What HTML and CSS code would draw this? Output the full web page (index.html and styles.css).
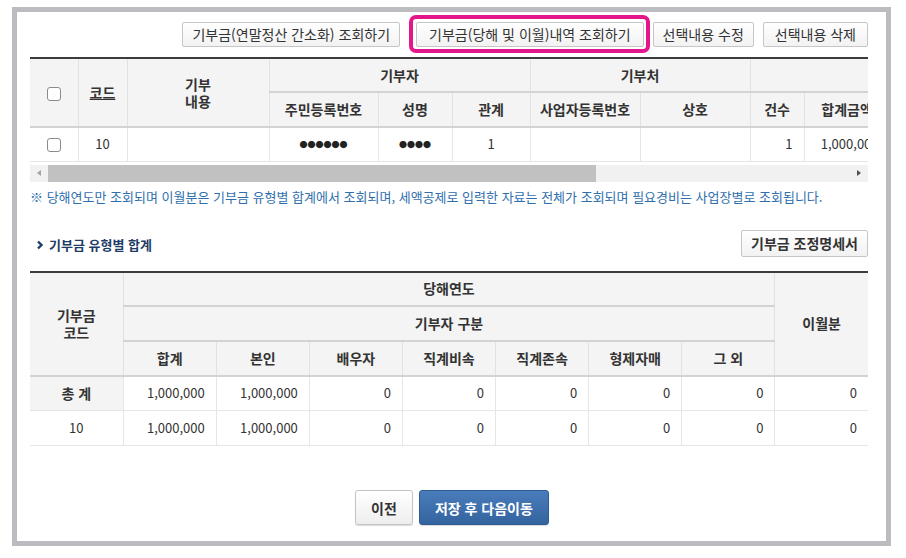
FILE: index.html
```html
<!doctype html>
<html lang="ko">
<head>
    <meta charset="UTF-8">
    <meta name="viewport" content="width=device-width, initial-scale=1.0">
    <title>기부금 명세</title>
    <link rel="stylesheet" href="styles.css">
</head>
<body>
    <div class="frame">
        <div class="top-actions">
            <button class="btn">기부금(연말정산 간소화) 조회하기</button>
            <span class="highlight"><button class="btn">기부금(당해 및 이월)내역 조회하기</button></span>
            <button class="btn">선택내용 수정</button>
            <button class="btn btn-last">선택내용 삭제</button>
        </div>

        <div class="scroll-view">
            <table class="grid list">
                <colgroup>
                    <col style="width:48px"><col style="width:49px"><col style="width:142px">
                    <col style="width:109px"><col style="width:74px"><col style="width:78px">
                    <col style="width:110px"><col style="width:110px"><col style="width:54px">
                    <col style="width:86px"><col style="width:110px"><col style="width:130px">
                    <col style="width:80px">
                </colgroup>
                <thead>
                    <tr>
                        <th rowspan="2"><span class="check"></span></th>
                        <th rowspan="2"><u>코드</u></th>
                        <th rowspan="2">기부<br>내용</th>
                        <th colspan="3" class="group">기부자</th>
                        <th colspan="2" class="group">기부처</th>
                        <th colspan="5" class="group last">기부명세</th>
                    </tr>
                    <tr>
                        <th>주민등록번호</th>
                        <th>성명</th>
                        <th>관계</th>
                        <th>사업자등록번호</th>
                        <th>상호</th>
                        <th>건수</th>
                        <th>합계금액</th>
                        <th>공제대상금액</th>
                        <th>장려금신청</th>
                        <th class="last">기타</th>
                    </tr>
                </thead>
                <tbody>
                    <tr>
                        <td class="center"><span class="check"></span></td>
                        <td class="center">10</td>
                        <td></td>
                        <td class="center"><span class="dots">●●●●●●</span></td>
                        <td class="center"><span class="dots">●●●●</span></td>
                        <td class="center">1</td>
                        <td></td>
                        <td></td>
                        <td class="num">1</td>
                        <td class="num">1,000,000</td>
                        <td class="num">1,000,000</td>
                        <td class="num">0</td>
                        <td class="last"></td>
                    </tr>
                </tbody>
            </table>
        </div>
        <div class="hscroll">
            <span class="arrow arrow-left"></span>
            <span class="thumb"></span>
            <span class="arrow arrow-right"></span>
        </div>

        <p class="notice">※ 당해연도만 조회되며 이월분은 기부금 유형별 합계에서 조회되며, 세액공제로 입력한 자료는 전체가 조회되며 필요경비는 사업장별로 조회됩니다.</p>

        <div class="section-head">
            <h4 class="section-title">
                <svg width="8" height="10" viewBox="0 0 8 10"><polyline points="2,1.5 5.5,5 2,8.5" fill="none" stroke="#1d3c66" stroke-width="2.4"/></svg>
                기부금 유형별 합계
            </h4>
            <button class="btn btn-strong">기부금 조정명세서</button>
        </div>

        <table class="grid summary">
            <thead>
                <tr>
                    <th rowspan="3">기부금<br>코드</th>
                    <th colspan="7" class="group">당해연도</th>
                    <th rowspan="3" class="last">이월분</th>
                </tr>
                <tr>
                    <th colspan="7" class="group">기부자 구분</th>
                </tr>
                <tr>
                    <th>합계</th>
                    <th>본인</th>
                    <th>배우자</th>
                    <th>직계비속</th>
                    <th>직계존속</th>
                    <th>형제자매</th>
                    <th>그 외</th>
                </tr>
            </thead>
            <tbody>
                <tr>
                    <td class="center total">총 계</td>
                    <td class="num">1,000,000</td>
                    <td class="num">1,000,000</td>
                    <td class="num">0</td>
                    <td class="num">0</td>
                    <td class="num">0</td>
                    <td class="num">0</td>
                    <td class="num">0</td>
                    <td class="num last">0</td>
                </tr>
                <tr>
                    <td class="center">10</td>
                    <td class="num">1,000,000</td>
                    <td class="num">1,000,000</td>
                    <td class="num">0</td>
                    <td class="num">0</td>
                    <td class="num">0</td>
                    <td class="num">0</td>
                    <td class="num">0</td>
                    <td class="num last">0</td>
                </tr>
            </tbody>
        </table>

        <div class="bottom-actions">
            <button class="btn-big">이전</button>
            <button class="btn-big btn-primary">저장 후 다음이동</button>
        </div>
    </div>
</body>
</html>
```

FILE: styles.css
```css
body {
    margin: 0;
    font-family: "Noto Sans CJK KR", "Liberation Sans", sans-serif;
    font-size: 13px;
    color: #333333;
    background-color: #ffffff;
}

.frame {
    box-sizing: border-box;
    width: 879px;
    height: 539px;
    margin: 7px 0 0 12px;
    padding: 0 18px 0 13px;
    border: 5px solid #bcbcc0;
}

/* top buttons */
.top-actions {
    display: flex;
    justify-content: flex-end;
    padding-top: 10px;
    margin-bottom: 10px;
}

.btn {
    height: 25px;
    padding: 0 9px;
    border: 1px solid #c6c6c6;
    border-radius: 2px;
    background: linear-gradient(#ffffff, #f2f2f2);
    font-family: inherit;
    font-size: 14px;
    line-height: 23px;
    color: #333333;
    cursor: pointer;
}

.highlight {
    position: relative;
    display: flex;
    margin: 0 9px 0 16px;
}

.highlight .btn {
    padding: 0 12px;
}

.highlight::after {
    content: "";
    position: absolute;
    top: -7px;
    left: -7px;
    right: -6px;
    bottom: -6px;
    border: 4px solid #e3168b;
    border-radius: 7px;
}

.btn-last {
    margin-left: 9px;
    padding: 0 11px;
}

/* tables */
.scroll-view {
    width: 838px;
    overflow: hidden;
}

.grid {
    border-collapse: collapse;
    table-layout: fixed;
    border-top: 2px solid #3c3c3c;
}

.grid th {
    background-color: #f4f4f4;
    font-size: 14px;
    font-weight: bold;
    color: #333333;
    text-align: center;
    line-height: 17px;
    padding: 0;
    border-right: 1px solid #e2e2e2;
    border-bottom: 2px solid #d3d3d3;
    white-space: nowrap;
}

.grid td {
    padding: 0;
    border-right: 1px solid #e6e6e6;
    border-bottom: 1px solid #e6e6e6;
    line-height: 16px;
}

.grid .last {
    border-right: none;
}

.grid .center {
    text-align: center;
}

.grid .num {
    text-align: right;
    padding-right: 11px;
}

.list {
    width: 1140px;
}

.list thead tr {
    height: 34px;
}

.list thead tr + tr {
    height: 35px;
}

.list tbody tr {
    height: 34px;
}

.check {
    display: inline-block;
    width: 12px;
    height: 12px;
    border: 1px solid #8b8b8b;
    border-radius: 3px;
    background-color: #ffffff;
    vertical-align: middle;
}

.dots {
    font-size: 8px;
    color: #222222;
}

/* fake horizontal scrollbar */
.hscroll {
    display: flex;
    align-items: center;
    width: 838px;
    height: 17px;
    margin-top: 3px;
    background-color: #f1f1f1;
}

.hscroll .thumb {
    width: 548px;
    height: 17px;
    margin-left: 1px;
    background-color: #c1c1c1;
}

.arrow {
    width: 0;
    height: 0;
    border-top: 3px solid transparent;
    border-bottom: 3px solid transparent;
}

.arrow-left {
    margin-left: 7px;
    margin-right: 6px;
    border-right: 4px solid #a3a3a3;
}

.arrow-right {
    margin-left: auto;
    margin-right: 7px;
    border-left: 4px solid #505050;
}

.notice {
    margin: 7px 0 0;
    font-size: 13px;
    line-height: 16px;
    color: #2f6fae;
    white-space: nowrap;
}

.section-head {
    display: flex;
    justify-content: space-between;
    align-items: center;
    margin-top: 25px;
    margin-bottom: 14px;
}

.section-title {
    display: flex;
    align-items: center;
    gap: 5px;
    margin: 3px 0 0 6px;
    font-size: 13px;
    color: #1d3c66;
}

.btn-strong {
    height: 27px;
    padding: 0 9px;
    font-weight: bold;
    line-height: 25px;
}

.summary {
    width: 838px;
}

.summary thead tr {
    height: 35px;
}

.summary thead tr:first-child {
    height: 34px;
}

.summary tbody tr {
    height: 35px;
}

.summary .total {
    background-color: #f4f4f4;
    font-weight: bold;
    font-size: 14px;
}

/* bottom buttons */
.bottom-actions {
    display: flex;
    justify-content: center;
    gap: 6px;
    margin-top: 44px;
    padding-left: 6px;
}

.btn-big {
    height: 35px;
    padding: 0 15px;
    border: 1px solid #c4c4c4;
    border-radius: 3px;
    background: linear-gradient(#ffffff, #eeeeee);
    font-family: inherit;
    font-size: 14px;
    font-weight: bold;
    color: #333333;
    box-shadow: 0 1px 1px rgba(0, 0, 0, 0.15);
    cursor: pointer;
}

.btn-primary {
    padding: 0 15px;
    border-color: #2d5b94;
    background: linear-gradient(#4a7cbb, #33649f);
    color: #ffffff;
}
```
